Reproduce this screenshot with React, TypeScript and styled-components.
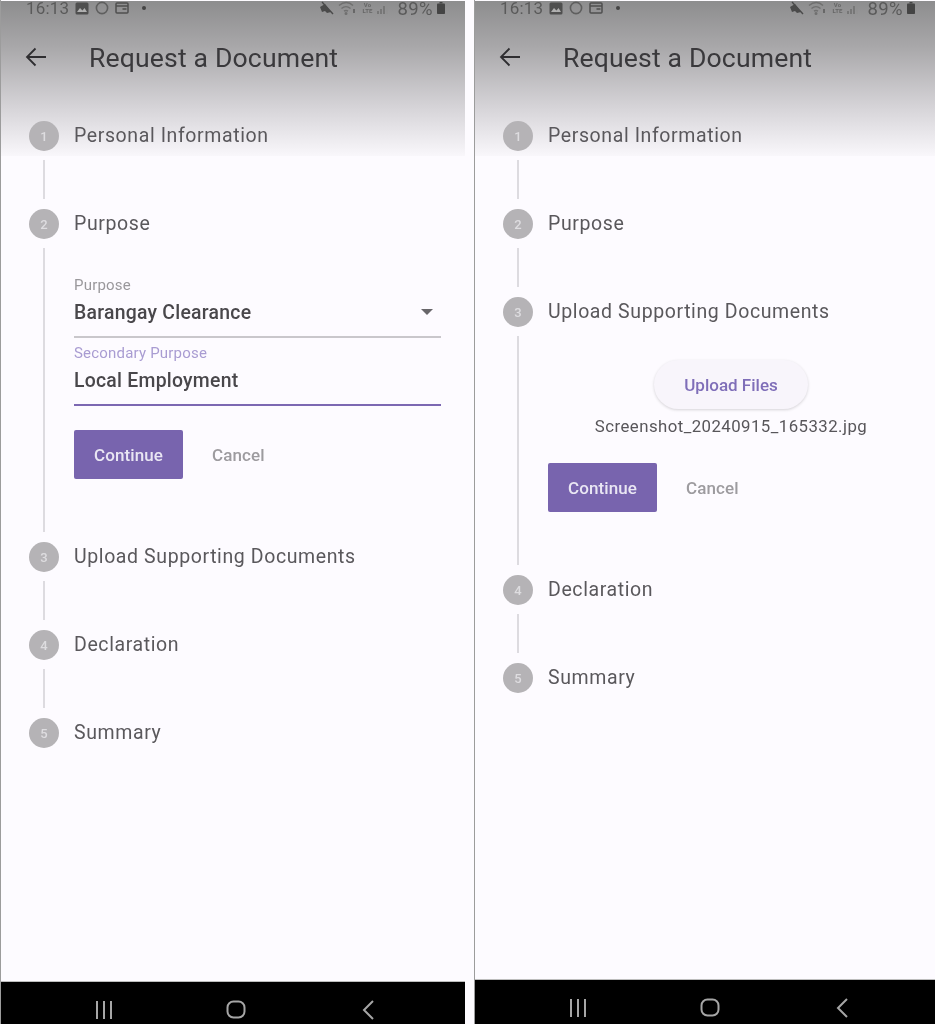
import React from 'react';
import styled, { createGlobalStyle } from 'styled-components';

const GlobalStyle = createGlobalStyle`
  html, body {
    margin: 0;
    padding: 0;
    background: #fdfbff;
    overflow: hidden;
  }
`;

const Page = styled.div`
  display: flex;
  gap: 9px;
  width: 935px;
  height: 1024px;
  font-family: Roboto, "Liberation Sans", sans-serif;
  filter: blur(0.6px);
`;

const Phone = styled.section<{ $width: number }>`
  display: flex;
  flex-direction: column;
  box-sizing: border-box;
  width: ${(p) => p.$width}px;
  height: 1024px;
  border-left: 1px solid #9c9c9c;
  background: linear-gradient(180deg, #8d8d8e 0%, #a9a8aa 30%, #d5d3d7 68%, #f9f7fb 100%) 0 1px / 100% 155px no-repeat #fdfbff;
`;

const StatusBar = styled.div`
  display: flex;
  align-items: center;
  height: 16px;
  padding: 0 20px 0 25px;
  color: #5a5a5a;
`;

const StatusText = styled.span`
  font-size: 17px;
  line-height: 16px;
  letter-spacing: 0.2px;
`;

const Battery = styled(StatusText)`
  margin: 2px 0 0 4px;
  font-size: 18.5px;
  letter-spacing: 0.4px;
`;

const StatusLeft = styled.div`
  display: flex;
  align-items: center;
  gap: 6px;
`;

const StatusRight = styled.div`
  display: flex;
  align-items: center;
  gap: 4px;
  margin-left: auto;
`;

const Lte = styled.span`
  font-size: 6px;
  line-height: 6px;
  width: 12px;
  text-align: center;
  font-weight: 700;
  color: #666;
`;

const AppBar = styled.header`
  display: flex;
  align-items: center;
  gap: 41px;
  height: 82px;
  padding: 0 0 0 23px;
`;

const Title = styled.h1`
  margin: 0;
  font-size: 26.6px;
  font-weight: 400;
  letter-spacing: 0.15px;
  color: #3a393c;
`;

const Stepper = styled.div`
  display: flex;
  flex-direction: column;
  flex: 1;
  padding: 23px 24px 0 28px;
`;

const Step = styled.div<{ $height: number }>`
  display: flex;
  gap: 15px;
  height: ${(p) => p.$height}px;
`;

const Rail = styled.div`
  display: flex;
  flex-direction: column;
  align-items: center;
  width: 30px;
`;

const Dot = styled.div`
  display: flex;
  flex: none;
  align-items: center;
  justify-content: center;
  width: 30px;
  height: 30px;
  border-radius: 50%;
  background: #b5b3b6;
  color: #dedde0;
  font-size: 13px;
  font-weight: 500;
`;

const Line = styled.div`
  flex: 1;
  width: 2px;
  margin: 9px 0 10px;
  background: #dddbe0;
`;

const StepBody = styled.div`
  display: flex;
  flex-direction: column;
  flex: 1;
  min-width: 0;
`;

const StepTitle = styled.div`
  height: 30px;
  font-size: 19.5px;
  line-height: 30px;
  letter-spacing: 0.6px;
  color: #5a585c;
`;

const Form = styled.div`
  display: flex;
  flex-direction: column;
  padding-top: 37px;
`;

const Field = styled.div<{ $active?: boolean }>`
  display: flex;
  flex-direction: column;
  height: 62px;
  box-sizing: border-box;
  border-bottom: 2px solid ${(p) => (p.$active ? '#7c68b2' : '#c9c7cb')};
  margin-bottom: ${(p) => (p.$active ? 0 : 6)}px;
`;

const FieldLabel = styled.label<{ $active?: boolean }>`
  height: 18px;
  font-size: 15px;
  line-height: 18px;
  letter-spacing: 0.2px;
  color: ${(p) => (p.$active ? '#a99cd2' : '#9a989c')};
`;

const FieldValue = styled.div`
  display: flex;
  align-items: center;
  justify-content: space-between;
  height: 36px;
  padding-right: 8px;
  font-size: 19.4px;
  font-weight: 500;
  letter-spacing: 0.25px;
  color: #49474b;
`;

const Actions = styled.div<{ $top: number }>`
  display: flex;
  align-items: center;
  gap: 29px;
  margin-top: ${(p) => p.$top}px;
`;

const Continue = styled.button`
  width: 109px;
  height: 49px;
  padding: 0;
  border: 0;
  border-radius: 2px;
  background: #7864ae;
  color: #e9e6f3;
  font: 500 17px Roboto, sans-serif;
  letter-spacing: 0.1px;
`;

const Cancel = styled.button`
  padding: 0;
  border: 0;
  background: none;
  color: #9d9b9f;
  font: 500 17px Roboto, sans-serif;
  letter-spacing: 0.1px;
`;

const Upload = styled.div`
  display: flex;
  flex-direction: column;
  align-items: center;
  padding: 33px 0 0 3px;
`;

const UploadButton = styled.button`
  width: 154px;
  height: 49px;
  padding: 0;
  border: 0;
  border-radius: 25px;
  background: #f8f5fb;
  box-shadow: 0 1px 3px rgba(0, 0, 0, 0.16);
  color: #7f6eb8;
  font: 500 17px Roboto, sans-serif;
`;

const FileName = styled.div`
  margin-top: 7px;
  font-size: 16.8px;
  line-height: 20px;
  letter-spacing: 0.45px;
  color: #58565a;
`;

const NavBar = styled.nav<{ $height: number }>`
  display: grid;
  grid-template-columns: repeat(3, 132px);
  justify-items: center;
  align-items: start;
  height: ${(p) => p.$height}px;
  box-sizing: border-box;
  padding: 18px 0 0 37px;
  border-top: 1px solid #bdbdbd;
  background: #000;
`;

const Svg = styled.svg`
  display: block;
  flex: none;
`;

const NoticeDot = styled(Svg)`
  margin-left: 6px;
`;

const BackArrow = () => (
  <Svg width="24" height="24" viewBox="0 0 24 24" fill="none" stroke="#2f2e31" strokeWidth="1.8">
    <path d="M22 12H3M11.5 3.5 3 12l8.500 8.500" />
  </Svg>
);

const GalleryIcon = () => (
  <Svg width="14" height="13" viewBox="0 0 14 13">
    <rect x="0.5" y="0.5" width="13" height="12" rx="1.5" fill="#4f4f4f" />
    <path d="M2 10l3-4 2.5 2.5L9.5 6 12 10z" fill="#b0b0b0" />
  </Svg>
);

const RingIcon = () => (
  <Svg width="14" height="14" viewBox="0 0 14 14" fill="none" stroke="#5f5f5f" strokeWidth="1.6">
    <circle cx="7" cy="7" r="5.6" />
  </Svg>
);

const PanelIcon = () => (
  <Svg width="14" height="12" viewBox="0 0 14 12" fill="none" stroke="#4f4f4f" strokeWidth="1.5">
    <rect x="1" y="1" width="12" height="10" rx="1" />
    <path d="M1 4h12M7.5 7h4" />
  </Svg>
);

const MuteIcon = () => (
  <Svg width="15" height="15" viewBox="0 0 15 15">
    <path d="M1 6l5-3 6 8-4 1-2-2-3 1z" fill="#4a4a4a" />
    <path d="M3 1l11 12" stroke="#4a4a4a" strokeWidth="1.4" />
  </Svg>
);

const WifiIcon = () => (
  <Svg width="19" height="14" viewBox="0 0 19 14" fill="none" stroke="#707070" strokeWidth="1.4">
    <path d="M1 4.5c4.500-4 10-4 14 0M3.500 7.500c3-2.500 6-2.500 9 0M6 10.200c1.500-1 2.500-1 4 0" />
    <circle cx="8" cy="12.500" r="0.8" fill="#707070" />
    <path d="M16 8v4" stroke="#555" />
  </Svg>
);

const SignalIcon = () => (
  <Svg width="12" height="11" viewBox="0 0 12 11" fill="#777">
    <rect x="0" y="8" width="2" height="3" />
    <rect x="3" y="6" width="2" height="5" />
    <rect x="6" y="3" width="2" height="8" />
    <rect x="9.500" y="0" width="1" height="11" fill="#909090" />
  </Svg>
);

const BatteryIcon = () => (
  <Svg width="8" height="12" viewBox="0 0 8 12" fill="#444">
    <rect x="2.500" y="0" width="3" height="1.500" />
    <rect x="0" y="1.500" width="8" height="10.500" rx="0.8" />
  </Svg>
);

const CaretIcon = () => (
  <Svg width="12" height="6" viewBox="0 0 12 6" fill="#68666a">
    <path d="M0 0h12L6 6z" />
  </Svg>
);

const RecentsIcon = () => (
  <Svg width="18" height="20" viewBox="0 0 18 20" stroke="#a6a6a6" strokeWidth="2">
    <path d="M2 1v18M9 1v18M16 1v18" />
  </Svg>
);

const HomeIcon = () => (
  <Svg width="20" height="19" viewBox="0 0 20 19" fill="none" stroke="#a6a6a6" strokeWidth="2">
    <rect x="1.500" y="1.500" width="17" height="16" rx="6" />
  </Svg>
);

const NavBackIcon = () => (
  <Svg width="12" height="20" viewBox="0 0 12 20" fill="none" stroke="#a6a6a6" strokeWidth="2">
    <path d="M11 1 2 10l9 9" />
  </Svg>
);

const Header = () => (
  <>
    <StatusBar>
      <StatusLeft>
        <StatusText>16:13</StatusText>
        <GalleryIcon />
        <RingIcon />
        <PanelIcon />
        <NoticeDot width="6" height="6" viewBox="0 0 6 6" fill="#444">
          <circle cx="3" cy="3" r="2" />
        </NoticeDot>
      </StatusLeft>
      <StatusRight>
        <MuteIcon />
        <WifiIcon />
        <Lte>Vo LTE</Lte>
        <SignalIcon />
        <Battery>89%</Battery>
        <BatteryIcon />
      </StatusRight>
    </StatusBar>
    <AppBar>
      <BackArrow />
      <Title>Request a Document</Title>
    </AppBar>
  </>
);

const NavButtons = ({ height }: { height: number }) => (
  <NavBar $height={height}>
    <RecentsIcon />
    <HomeIcon />
    <NavBackIcon />
  </NavBar>
);

type RowProps = {
  n: number;
  title: string;
  height?: number;
  last?: boolean;
  children?: React.ReactNode;
};

const StepRow = ({ n, title, height = 88, last, children }: RowProps) => (
  <Step $height={height}>
    <Rail>
      <Dot>{n}</Dot>
      {!last && <Line />}
    </Rail>
    <StepBody>
      <StepTitle>{title}</StepTitle>
      {children}
    </StepBody>
  </Step>
);

const Buttons = ({ top }: { top: number }) => (
  <Actions $top={top}>
    <Continue>Continue</Continue>
    <Cancel>Cancel</Cancel>
  </Actions>
);

export default function App() {
  return (
    <>
      <GlobalStyle />
      <Page>
        <Phone $width={465}>
          <Header />
          <Stepper>
            <StepRow n={1} title="Personal Information" />
            <StepRow n={2} title="Purpose" height={333}>
              <Form>
                <Field>
                  <FieldLabel>Purpose</FieldLabel>
                  <FieldValue>
                    Barangay Clearance
                    <CaretIcon />
                  </FieldValue>
                </Field>
                <Field $active>
                  <FieldLabel $active>Secondary Purpose</FieldLabel>
                  <FieldValue>Local Employment</FieldValue>
                </Field>
                <Buttons top={24} />
              </Form>
            </StepRow>
            <StepRow n={3} title="Upload Supporting Documents" />
            <StepRow n={4} title="Declaration" />
            <StepRow n={5} title="Summary" last />
          </Stepper>
          <NavButtons height={43} />
        </Phone>
        <Phone $width={461}>
          <Header />
          <Stepper>
            <StepRow n={1} title="Personal Information" />
            <StepRow n={2} title="Purpose" />
            <StepRow n={3} title="Upload Supporting Documents" height={278}>
              <Upload>
                <UploadButton>Upload Files</UploadButton>
                <FileName>Screenshot_20240915_165332.jpg</FileName>
              </Upload>
              <Buttons top={27} />
            </StepRow>
            <StepRow n={4} title="Declaration" />
            <StepRow n={5} title="Summary" last />
          </Stepper>
          <NavButtons height={45} />
        </Phone>
      </Page>
    </>
  );
}
